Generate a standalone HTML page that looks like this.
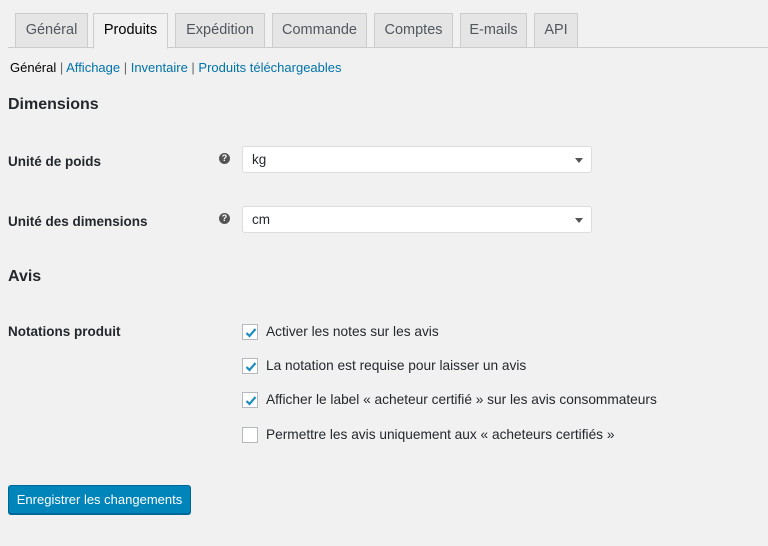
<!DOCTYPE html>
<html><head><meta charset="utf-8"><style>
*{box-sizing:border-box;margin:0;padding:0}
body{width:768px;height:546px;background:#f1f1f1;font-family:"Liberation Sans",sans-serif;color:#23282d;position:relative;overflow:hidden;font-size:13px}
.line{position:absolute;left:8px;right:0;top:47px;height:1px;background:#ccc}
.tab{position:absolute;top:13px;height:35px;border:1px solid #ccc;background:#e5e5e5;color:#50575e;font-size:14.5px;text-align:center;line-height:33px}
.tab.act{background:#f1f1f1;color:#000;border-bottom-color:#f1f1f1;height:36px}
.a{position:absolute;white-space:nowrap}
.sub{top:60px;left:10px;font-size:13px;color:#666}
.sub a{color:#0073aa;text-decoration:none}
h2{position:absolute;font-size:16px;font-weight:600;left:8px}
.lbl{position:absolute;left:8px;font-size:13.5px;font-weight:600}
.q{position:absolute;left:219px;width:11px;height:11px;border-radius:50%;background:#555;color:#fff;font-size:9px;font-weight:bold;text-align:center;line-height:11px}
.sel{position:absolute;left:242px;width:350px;height:27px;background:#fff;border:1px solid #ddd;border-radius:3px;padding-left:9px;line-height:25px;font-size:13.5px}
.sel:after{content:"";position:absolute;right:8px;top:11px;border:4px solid transparent;border-top:5px solid #555}
.cb{position:absolute;left:242px;width:16px;height:16px;background:#fff;border:1px solid #b4b9be}
.cb svg{position:absolute;left:1px;top:1px}
.ct{position:absolute;left:266px;font-size:13.7px;white-space:nowrap}
.btn{position:absolute;left:8px;top:485px;width:183px;height:29px;background:#0085ba;border:1px solid #006799;border-radius:3px;box-shadow:0 1px 0 #006799;color:#fff;font-size:13px;text-align:center;line-height:27px}
</style></head><body>
<div class="line"></div>
<div class="tab" style="left:15px;width:73px">Général</div>
<div class="tab act" style="left:93px;width:75px">Produits</div>
<div class="tab" style="left:175px;width:90px">Expédition</div>
<div class="tab" style="left:272px;width:95px">Commande</div>
<div class="tab" style="left:374px;width:79px">Comptes</div>
<div class="tab" style="left:460px;width:67px">E-mails</div>
<div class="tab" style="left:534px;width:44px">API</div>
<div class="a sub"><b style="color:#000;font-weight:normal">Général</b> | <a>Affichage</a> | <a>Inventaire</a> | <a>Produits téléchargeables</a></div>
<h2 style="top:96px">Dimensions</h2>
<div class="lbl" style="top:154px">Unité de poids</div>
<div class="q" style="top:153px">?</div>
<div class="sel" style="top:146px">kg</div>
<div class="lbl" style="top:214px">Unité des dimensions</div>
<div class="q" style="top:213px">?</div>
<div class="sel" style="top:206px">cm</div>
<h2 style="top:268px">Avis</h2>
<div class="lbl" style="top:324px">Notations produit</div>
<div class="cb" style="top:324px"><svg width="14" height="14" viewBox="0 0 14 14"><path d="M2.5 7l3 3 6-7" stroke="#1e8cbe" stroke-width="2.2" fill="none"/></svg></div>
<div class="ct" style="top:324px">Activer les notes sur les avis</div>
<div class="cb" style="top:358px"><svg width="14" height="14" viewBox="0 0 14 14"><path d="M2.5 7l3 3 6-7" stroke="#1e8cbe" stroke-width="2.2" fill="none"/></svg></div>
<div class="ct" style="top:358px">La notation est requise pour laisser un avis</div>
<div class="cb" style="top:392px"><svg width="14" height="14" viewBox="0 0 14 14"><path d="M2.5 7l3 3 6-7" stroke="#1e8cbe" stroke-width="2.2" fill="none"/></svg></div>
<div class="ct" style="top:392px">Afficher le label « acheteur certifié » sur les avis consommateurs</div>
<div class="cb" style="top:427px"></div>
<div class="ct" style="top:427px">Permettre les avis uniquement aux « acheteurs certifiés »</div>
<div class="btn">Enregistrer les changements</div>
</body></html>
